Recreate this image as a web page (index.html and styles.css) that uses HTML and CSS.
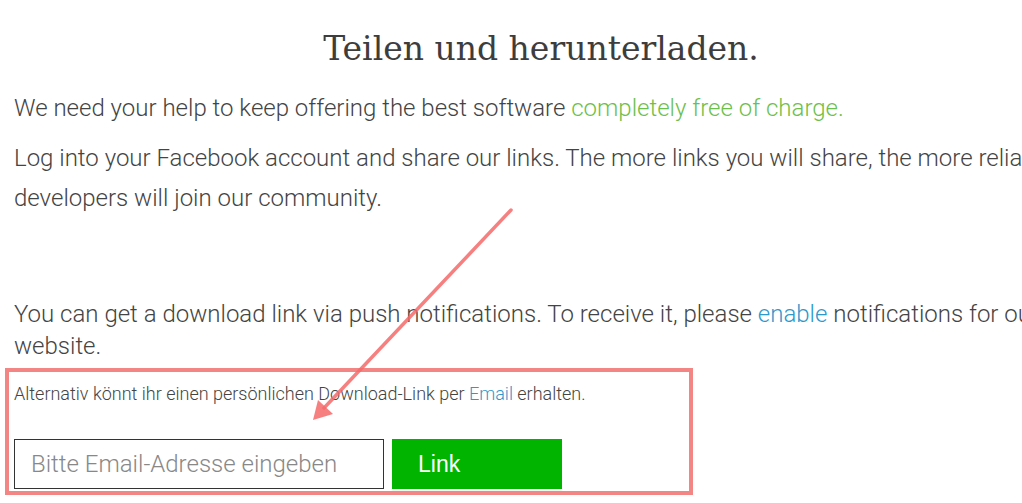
FILE: index.html
```html
<!DOCTYPE html>
<html lang="de">
<head>
    <meta charset="UTF-8">
    <meta name="viewport" content="width=device-width, initial-scale=1.0">
    <title>Teilen und herunterladen</title>
    <link rel="stylesheet" href="styles.css">
</head>
<body>
    <div class="page">
        <h1 class="title">Teilen und herunterladen.</h1>

        <p class="lead">We need your help to keep offering the best software <span class="green">completely free of charge.</span></p>
        <p class="lead">Log into your Facebook account and share our links. The more links you will share, the more reliable developers will join our community.</p>

        <p class="push">You can get a download link via push notifications. To receive it, please <a href="#" class="blue">enable</a> notifications for our website.</p>

        <div class="mail-box">
            <p class="mail-note">Alternativ könnt ihr einen persönlichen Download-Link per <a href="#" class="blue">Email</a> erhalten.</p>
            <form class="mail-form" onsubmit="return false">
                <input type="email" class="mail-input" placeholder="Bitte Email-Adresse eingeben">
                <button type="submit" class="mail-btn">Link</button>
            </form>
        </div>
    </div>

    <!-- annotation arrow drawn over the page -->
    <svg class="arrow" width="1022" height="503" viewBox="0 0 1022 503">
        <line x1="511" y1="210" x2="324" y2="408" stroke="#f56a6a" stroke-width="3.5" stroke-opacity="0.85" stroke-linecap="round"/>
        <polygon points="313,420 318,400 333,414" fill="#f56a6a" fill-opacity="0.85"/>
    </svg>
</body>
</html>
```

FILE: styles.css
```css
html, body {
    overflow: hidden;
}

body {
    margin: 0;
    padding: 0 0 0 14px;
    font-family: Roboto, "Noto Sans", sans-serif;
    font-weight: 300;
    color: #444;
    background: #fff;
}

.page {
    width: 1054px;
}

.title {
    margin: 26px 0 0;
    font-family: "DejaVu Serif", serif;
    font-weight: normal;
    font-size: 33px;
    line-height: 46px;
    text-align: center;
    color: #3d3d3d;
}

.lead {
    margin: 16px 0 0;
    font-size: 24px;
    line-height: 40px;
}

.lead + .lead {
    margin-top: 10px;
}

.push {
    margin: 80px 0 0;
    font-size: 24px;
    line-height: 32px;
}

.green {
    color: #6dbf4b;
}

.blue {
    color: #2e98cc;
    text-decoration: none;
}

.mail-box {
    width: 675px;
    margin: 6px 0 0 -9px;
    border: 4px solid #f48585;
    padding: 0 0 2px 5px;
}

.mail-note {
    margin: 0;
    padding-top: 10px;
    font-size: 18px;
    line-height: 24px;
}

.mail-form {
    display: flex;
    gap: 8px;
    margin-top: 33px;
}

.mail-input {
    box-sizing: border-box;
    width: 370px;
    height: 50px;
    margin: 0;
    padding: 0 16px;
    border: 1px solid #333;
    font-family: Roboto, sans-serif;
    font-weight: 300;
    font-size: 24px;
    color: #444;
}

.mail-input::placeholder {
    color: #888;
}

.mail-btn {
    width: 170px;
    height: 50px;
    margin: 0;
    padding: 0 0 0 26px;
    border: none;
    background: #00b400;
    color: #fff;
    font-family: "Liberation Sans", Arial, sans-serif;
    font-size: 23px;
    text-align: left;
    cursor: pointer;
}

.arrow {
    position: absolute;
    left: 0;
    top: 0;
    pointer-events: none;
}
```
